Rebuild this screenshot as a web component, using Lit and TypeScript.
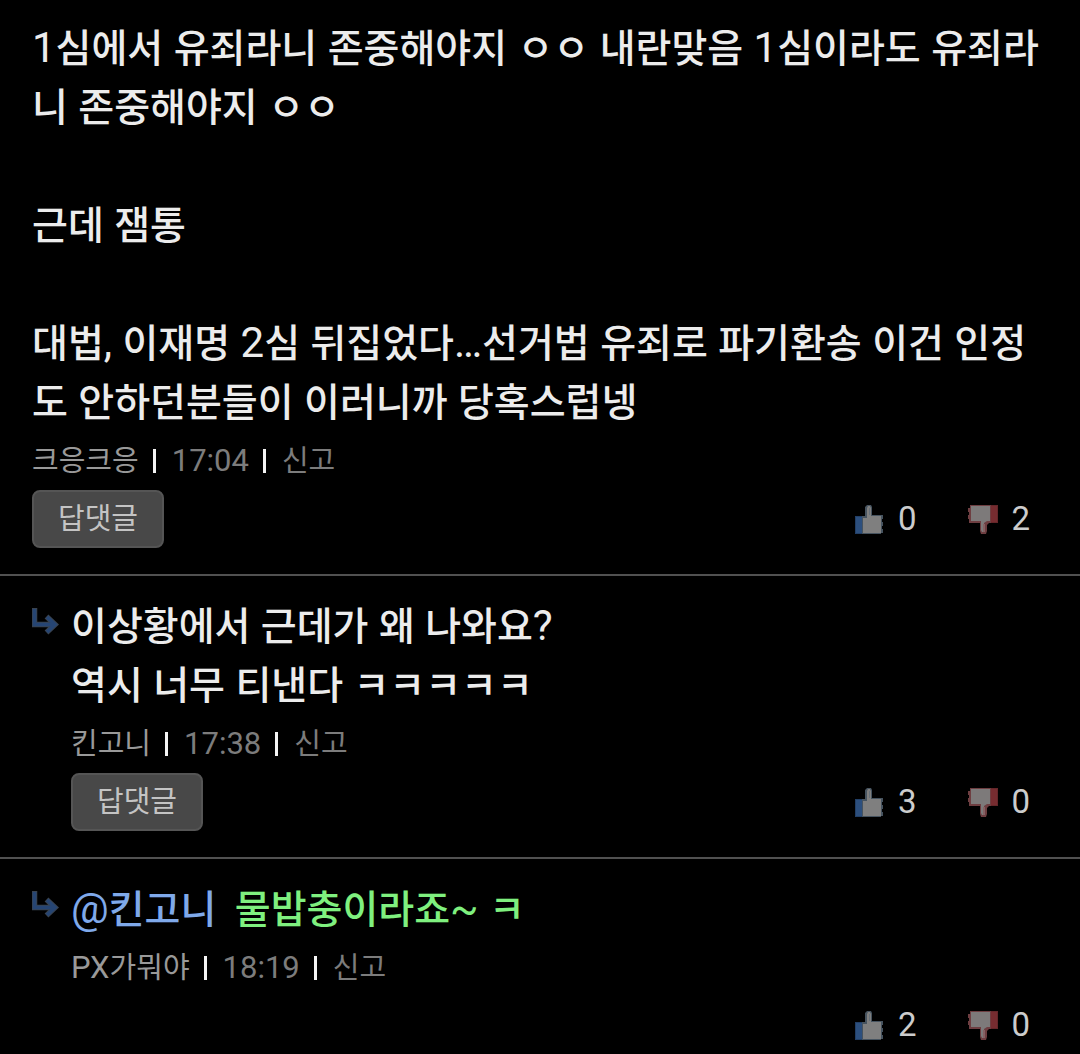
import { LitElement, html, css, svg, nothing } from "lit";
import { customElement, property } from "lit/decorators.js";

interface Comment {
  lines: string[];
  mention?: string;
  author: string;
  time: string;
  up: number;
  down: number;
  reply: boolean;
  answerable: boolean;
  highlight: boolean;
}

// A "|" in a line marks a place where the line may break.
const comments: Comment[] = [
  {
    lines: [
      "1심에서 유죄라니 존중해야지 ㅇㅇ 내란맞음 1심이라도 유죄라|니 존중해야지 ㅇㅇ",
      "",
      "근데 잼통",
      "",
      "대법, 이재명 2심 뒤집었다…선거법 유죄로 파기환송 이건 인정|도 안하던분들이 이러니까 당혹스럽넹",
    ],
    author: "크응크응",
    time: "17:04",
    up: 0,
    down: 2,
    reply: false,
    answerable: true,
    highlight: false,
  },
  {
    lines: ["이상황에서 근데가 왜 나와요?", "역시 너무 티낸다 ㅋㅋㅋㅋㅋ"],
    author: "킨고니",
    time: "17:38",
    up: 3,
    down: 0,
    reply: true,
    answerable: true,
    highlight: false,
  },
  {
    lines: ["물밥충이라죠~ ㅋ"],
    mention: "@킨고니",
    author: "PX가뭐야",
    time: "18:19",
    up: 2,
    down: 0,
    reply: true,
    answerable: false,
    highlight: true,
  },
];

// Hangul runs are set slightly smaller than the Latin text around them.
const mixed = (text: string) =>
  text
    .split(/([\u3131-\u318e\uac00-\ud7a3]+)/)
    .map((part, i) =>
      i % 2 ? html`<span class="ko">${part}</span>` : part === "|" ? html`<wbr />` : part
    );

const thumbUp = svg`
  <svg class="thumb" viewBox="0 0 30 30" aria-hidden="true">
    <path d="M0 12h8v18H0z" fill="#223f66"/>
    <path d="M1 13h6v16H1z" fill="#2c4f7e"/>
    <path d="M7 12h3V3l2-2h4l1 2v8h11v4h-1v3h1v4h-1v3h1v4h-2v2H7z" fill="#46535f"/>
    <path d="M8 14h4V4l1-2h2l1 2v8h10v17H8z" fill="#7f7f7f"/>
    <path d="M14 4h1v7h-1z" fill="#66707a"/>
  </svg>`;

const thumbDown = svg`
  <svg class="thumb" viewBox="0 0 30 30" aria-hidden="true">
    <path d="M22 1h8v18h-8z" fill="#642629"/>
    <path d="M23 2h6v16h-6z" fill="#762c30"/>
    <path d="M23 1H2v3H0v4h1v3H0v4h1v4h11v8l1 3h5l1-3v-6l2-2h2z" fill="#6e3e41"/>
    <path d="M22 2H3v15h10v9l1 2h2v-9l3-2h3z" fill="#7d7a7a"/>
    <path d="M15 20h2v8h-2z" fill="#866264"/>
  </svg>`;

const replyArrow = svg`
  <svg class="arrow" viewBox="0 0 27 27" fill="none" aria-hidden="true">
    <path d="M2.5 0v16.5H22M14.5 8.5l8.5 8-8.5 8" stroke="#394350" stroke-width="5.5"/>
    <path d="M2.5 1v15.5H22M15 9l8 7.500-8 7.500" stroke="#264573" stroke-width="3.5"/>
  </svg>`;

@customElement("comment-item")
class CommentItem extends LitElement {
  @property({ attribute: false }) comment!: Comment;

  static styles = css`
    :host {
      display: block;
    }
    .item {
      display: flex;
      padding: 20px 32px 26px;
    }
    .marker {
      flex: none;
      width: 39px;
      padding-top: 12px;
    }
    .arrow {
      display: block;
      width: 27px;
      height: 27px;
    }
    .content {
      flex: 1;
      min-width: 0;
    }
    .text {
      margin: 0;
      font-size: 42px;
      line-height: 59px;
      min-height: 59px;
      color: #ececec;
    }
    .text .ko {
      font-size: 39px;
      font-weight: 500;
      line-height: 1;
    }
    .text.highlight {
      color: #7ff07f;
    }
    .mention {
      margin-right: 8px;
      color: #7fa9ea;
      text-decoration: none;
    }
    .meta {
      display: flex;
      align-items: center;
      height: 59px;
      font-size: 31px;
      line-height: 59px;
      color: #999;
    }
    .meta .ko {
      font-size: 29px;
      line-height: 1;
    }
    .sep {
      width: 3px;
      height: 24px;
      margin: 0 16px 0 14px;
      background: #f4f4f4;
    }
    .time {
      color: #7c7c7c;
    }
    .report {
      color: #7c7c7c;
      text-decoration: none;
    }
    .actions {
      display: flex;
      align-items: center;
      min-height: 56px;
    }
    button {
      font-family: inherit;
      cursor: pointer;
    }
    .answer {
      height: 58px;
      padding: 0 24px;
      border: 2px solid #555;
      border-radius: 8px;
      background: #484848;
      color: #c4c4c4;
      font-size: 29px;
      line-height: 50px;
    }
    .votes {
      display: flex;
      gap: 52px;
      margin-left: auto;
      padding-right: 18px;
    }
    .vote {
      display: flex;
      align-items: center;
      gap: 13px;
      padding: 0;
      border: 0;
      background: none;
      color: #ccc;
      font-size: 33px;
      line-height: 40px;
    }
    .thumb {
      display: block;
      width: 30px;
      height: 30px;
    }
  `;

  render() {
    const c = this.comment;
    return html`
      <article class="item">
        ${c.reply ? html`<div class="marker">${replyArrow}</div>` : nothing}
        <div class="content">
          ${c.lines.map(
            (line) => html`<p class="text ${c.highlight ? "highlight" : ""}">${c.mention
              ? html`<a class="mention" href="#">${mixed(c.mention)}</a> `
              : nothing}${mixed(line)}</p>`
          )}
          <div class="meta">
            <span>${mixed(c.author)}</span>
            <span class="sep"></span>
            <time class="time">${c.time}</time>
            <span class="sep"></span>
            <a class="report" href="#">${mixed("신고")}</a>
          </div>
          <div class="actions">
            ${c.answerable ? html`<button class="answer" type="button">답댓글</button>` : nothing}
            <div class="votes">
              <button class="vote" type="button" aria-label="추천 ${c.up}">${thumbUp}<span>${c.up}</span></button>
              <button class="vote" type="button" aria-label="비추천 ${c.down}">${thumbDown}<span>${c.down}</span></button>
            </div>
          </div>
        </div>
      </article>
    `;
  }
}

@customElement("app-root")
class AppRoot extends LitElement {
  static styles = css`
    :host {
      display: block;
      min-height: 100vh;
      background: #000;
      font-family: Roboto, "Noto Sans CJK KR", sans-serif;
    }
    .list {
      display: flow-root;
    }
    .row + .row {
      border-top: 2px solid #515151;
    }
    .row:first-child {
      margin-top: -2px;
    }
    .row:last-child {
      margin-bottom: -26px;
    }
  `;

  render() {
    return html`
      <main class="list">
        ${comments.map((c) => html`<comment-item class="row" .comment=${c}></comment-item>`)}
      </main>
    `;
  }
}
